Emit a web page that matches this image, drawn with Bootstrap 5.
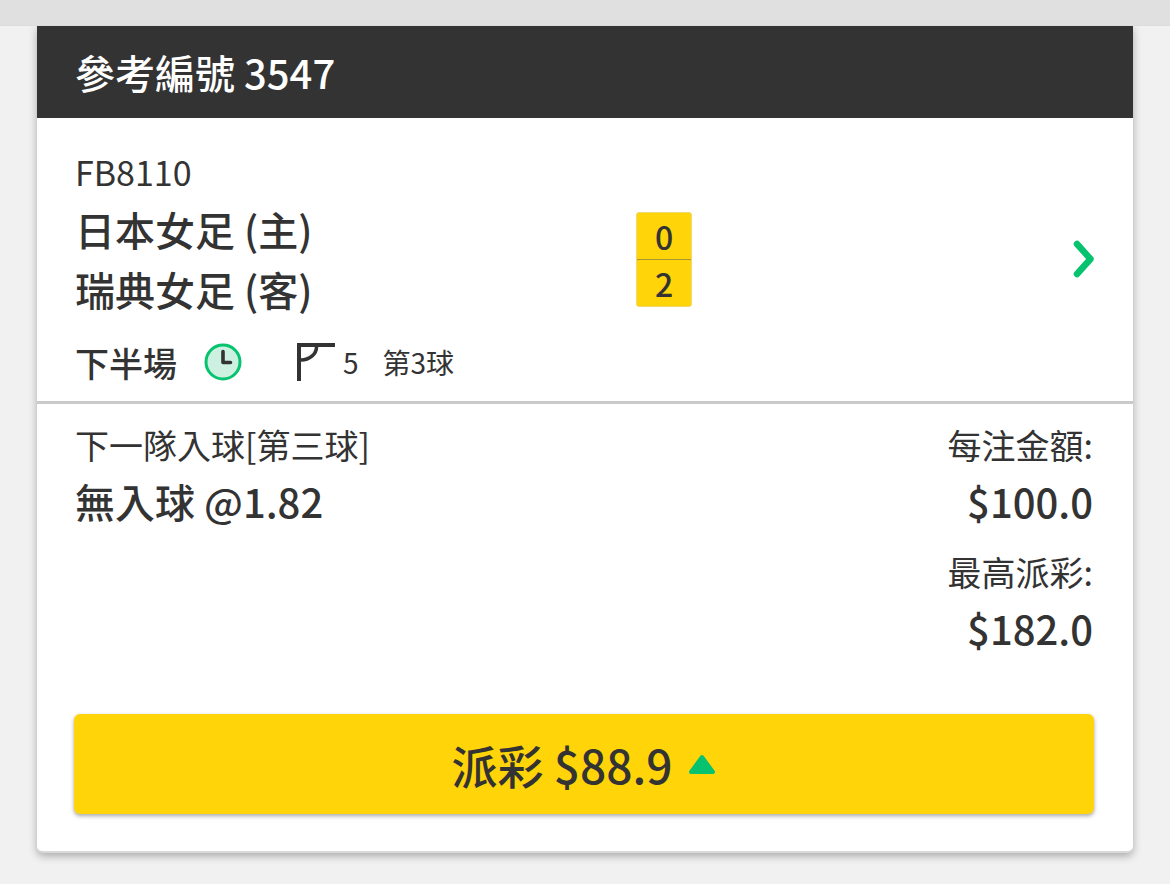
<!DOCTYPE html>
<html lang="zh-Hant">
<head>
<meta charset="utf-8">
<meta name="viewport" content="width=device-width, initial-scale=1">
<title>參考編號 3547</title>
<link href="https://cdn.jsdelivr.net/npm/bootstrap@5.3.0/dist/css/bootstrap.min.css" rel="stylesheet">
<style>
  :root { --ink: #333; --yellow: #ffd409; --green: #07c26e; --gutter: 38px; }
  body { min-height: 100vh; background: #f1f1f1; color: var(--ink); font-family: "Noto Sans CJK TC", sans-serif; }
  .top-strip { height: 26px; background: #e0e0e0; border-bottom: 1px solid #dcdcdc; z-index: 1; }
  .bet-slip { margin: 0 37px; border: 0; border-bottom: 2px solid #d9d9d9; border-radius: 0 0 6px 6px; box-shadow: 0 3px 8px rgba(0,0,0,.3); color: var(--ink); }
  .bet-slip > .card-header { background: var(--ink); color: #fff; border: 0; border-radius: 0; padding: 16px var(--gutter); }
  .slip-title { font-size: 40px; line-height: 60px; font-weight: 500; }
  .match { padding: 27px var(--gutter) 0; border-bottom: 3px solid #cacaca; }
  .match-code { font-size: 34px; line-height: 54px; }
  .teams { flex: 0 0 55%; font-size: 40px; line-height: 60px; font-weight: 500; }
  .score { width: 56px; background: var(--yellow); border: 1px solid #f0d870; border-radius: 3px; font-size: 32px; line-height: 46px; font-weight: 500; }
  .score div + div { border-top: 1px solid #a89530; }
  .status { height: 82px; padding-top: 4px; }
  .period { font-size: 34px; font-weight: 500; }
  .clock { margin-left: 26px; }
  .corner { margin-left: 54px; }
  .detail { font-size: 28px; }
  .bets { padding: 13px var(--gutter) 0; }
  .label-line { font-size: 34px; line-height: 56px; }
  .value-line { font-size: 40px; line-height: 56px; font-weight: 500; }
  .amounts { margin-right: 2px; }
  .amount + .amount { margin-top: 15px; }
  .payout { padding: 58px 39px 37px 37px; }
  .btn-payout { height: 100px; padding: 0; border: 0; border-radius: 6px; font-size: 46px; font-weight: 500; gap: 16px; box-shadow: 0 2px 4px rgba(0,0,0,.35); --bs-btn-color: var(--ink); --bs-btn-bg: var(--yellow); --bs-btn-hover-bg: #f5ca00; --bs-btn-active-bg: #ebc200; }
</style>
</head>
<body>
<div class="top-strip position-relative"></div>
<main class="card bet-slip">
  <div class="card-header"><h1 class="slip-title mb-0">參考編號 3547</h1></div>

  <section class="match">
    <div class="match-code">FB8110</div>
    <div class="d-flex align-items-center">
      <div class="teams">
        <div>日本女足 (主)</div>
        <div>瑞典女足 (客)</div>
      </div>
      <div>
        <div class="score text-center">
          <div>0</div>
          <div>2</div>
        </div>
      </div>
      <a href="#" class="ms-auto d-flex" aria-label="賽事詳情">
        <svg width="22" height="40" viewBox="0 0 22 40" fill="none" stroke="#07c26e" stroke-width="6.500" stroke-linecap="round" stroke-linejoin="round"><path d="M4 5L17.500 20L4 35"/></svg>
      </a>
    </div>
    <div class="status d-flex align-items-center">
      <span class="period">下半場</span>
      <svg class="clock" width="40" height="40" viewBox="0 0 40 40" aria-hidden="true"><circle cx="20" cy="20" r="17" fill="#ccf1e0" stroke="#07c26e" stroke-width="3"/><path d="M20 9.500V20.500H27.500" fill="none" stroke="#333" stroke-width="3.600" stroke-linecap="round" stroke-linejoin="round"/></svg>
      <svg class="corner" width="38" height="38" viewBox="0 0 38 38" aria-hidden="true"><path d="M0 0H38V4H4V38H0Z" fill="#333"/><path d="M19.500 4A15.500 13 0 0 1 4 17" fill="#f4f4f4" stroke="#333" stroke-width="3.500"/></svg>
      <span class="detail ms-2">5</span>
      <span class="detail ms-4">第3球</span>
    </div>
  </section>

  <section class="bets d-flex justify-content-between">
    <div>
      <div class="label-line">下一隊入球[第三球]</div>
      <div class="value-line">無入球 @1.82</div>
    </div>
    <div class="amounts text-end">
      <div class="amount">
        <div class="label-line">每注金額:</div>
        <div class="value-line">$100.0</div>
      </div>
      <div class="amount">
        <div class="label-line">最高派彩:</div>
        <div class="value-line">$182.0</div>
      </div>
    </div>
  </section>

  <div class="payout">
    <button type="button" class="btn btn-payout w-100 d-flex align-items-center justify-content-center">
      <span>派彩 $88.9</span>
      <svg width="28" height="22" viewBox="0 0 28 22" aria-hidden="true"><path d="M14 4L25 19H3Z" fill="#07c26e" stroke="#07c26e" stroke-width="4" stroke-linejoin="round"/></svg>
    </button>
  </div>
</main>
<script src="https://cdn.jsdelivr.net/npm/bootstrap@5.3.0/dist/js/bootstrap.bundle.min.js"></script>
</body>
</html>
